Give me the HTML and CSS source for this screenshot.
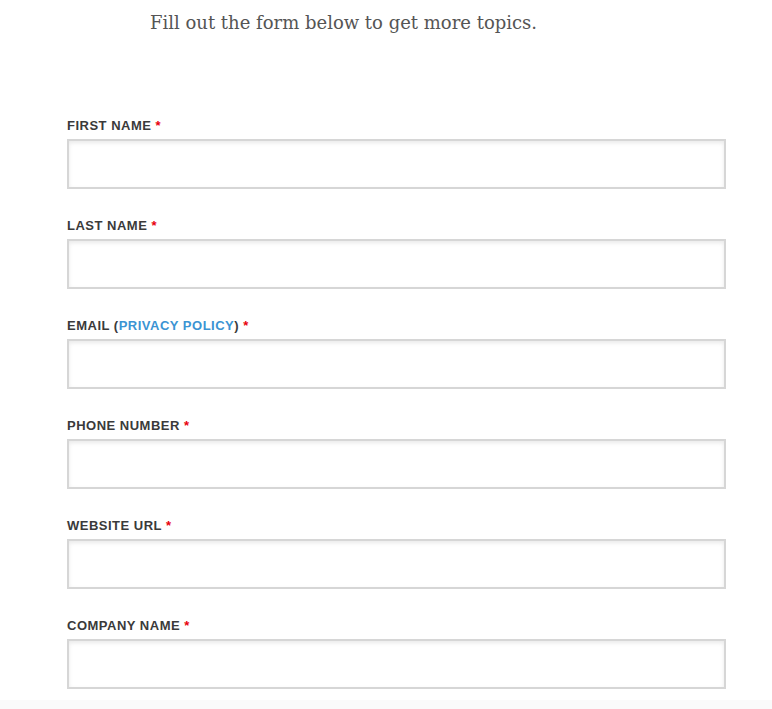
FILE: index.html
```html
<!DOCTYPE html>
<html>
<head>
<meta charset="utf-8">
<link rel="stylesheet" href="styles.css">
</head>
<body>
<div class="page">
  <p class="intro">Fill out the form below to get more topics.</p>
  <form class="form">
    <div class="field">
      <label class="label">FIRST NAME <span class="req">*</span></label>
      <input class="input" type="text">
    </div>
    <div class="field">
      <label class="label">LAST NAME <span class="req">*</span></label>
      <input class="input" type="text">
    </div>
    <div class="field">
      <label class="label">EMAIL (<a class="link" href="#">PRIVACY POLICY</a>) <span class="req">*</span></label>
      <input class="input" type="text">
    </div>
    <div class="field">
      <label class="label">PHONE NUMBER <span class="req">*</span></label>
      <input class="input" type="text">
    </div>
    <div class="field">
      <label class="label">WEBSITE URL <span class="req">*</span></label>
      <input class="input" type="text">
    </div>
    <div class="field">
      <label class="label">COMPANY NAME <span class="req">*</span></label>
      <input class="input" type="text">
    </div>
  </form>
</div>
<div class="footer"></div>
</body>
</html>
```
FILE: styles.css
```css
html, body {
  margin: 0;
  padding: 0;
  background: #fafafa;
  height: 100%;
}
.page {
  background: #fff;
  padding: 11px 0 11px 0;
}
.intro {
  margin: 0 0 0 150px;
  font-family: "DejaVu Serif", "Liberation Serif", serif;
  font-size: 18px;
  line-height: 24px;
  color: #555;
}
.form {
  margin: 83px 0 0 67px;
  width: 659px;
  display: flex;
  flex-direction: column;
  gap: 29px;
}
.field {
  display: flex;
  flex-direction: column;
  gap: 5px;
}
.label {
  font-family: "Liberation Sans", Arial, sans-serif;
  font-weight: bold;
  font-size: 13px;
  line-height: 16px;
  letter-spacing: 0.5px;
  color: #3a3a3a;
}
.req {
  color: #e8000b;
}
.link {
  color: #3b94d3;
  text-decoration: none;
}
.input {
  box-sizing: border-box;
  width: 659px;
  height: 50px;
  margin: 0;
  border: 2px solid #d6d6d6;
  background: #fff;
  box-shadow: inset 0 2px 4px rgba(0, 0, 0, 0.09);
  outline: none;
}
.footer {
  background: #fafafa;
}
```
